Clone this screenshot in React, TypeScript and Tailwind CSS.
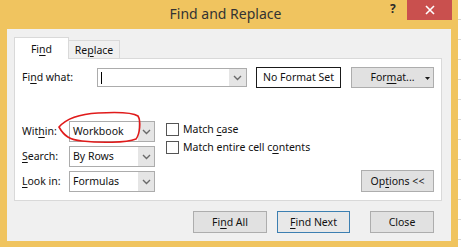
import React from "react";

const Chevron = () => (
  <svg width="9" height="6" viewBox="0 0 9 6">
    <polyline points="1,1 4.5,4.5 8,1" fill="none" stroke="#6a6a6a" strokeWidth="1.4" />
  </svg>
);

const U = ({ children }: { children: React.ReactNode }) => (
  <span className="underline decoration-1 underline-offset-[2px]">{children}</span>
);

function Select({ value }: { value: string }) {
  return (
    <div className="flex h-[21px] w-[86px] border border-[#acacac] bg-white">
      <div className="flex flex-1 items-center pl-[3px] text-[#111111]">{value}</div>
      <div className="flex w-[16px] items-center justify-center bg-[#e5e5e5]">
        <Chevron />
      </div>
    </div>
  );
}

function Btn({
  children,
  w,
  def,
}: {
  children: React.ReactNode;
  w: string;
  def?: boolean;
}) {
  return (
    <div
      className={
        "flex h-[22px] items-center justify-center border text-[#111111] " +
        w +
        (def ? " border-[#3c7fb1] bg-[#e8e8e8]" : " border-[#adadad] bg-[#e1e1e1]")
      }
    >
      {children}
    </div>
  );
}

export default function App() {
  return (
    <div className="relative flex h-[247px] w-[461px] overflow-hidden bg-white font-['Noto_Sans',sans-serif] text-[10.5px] leading-none">
      {/* window */}
      <div className="flex h-[247px] w-[458px] flex-col bg-[#f0c45f] pb-[6px] pl-[7px] pr-[7px]">
        {/* title bar */}
        <div className="relative flex h-[29px] shrink-0 items-center justify-center">
          <div className="-ml-[7px] -mt-[2px] text-[14px] text-[#333333]">Find and Replace</div>
          <div className="absolute left-[383px] top-[3px] text-[12px] font-bold text-[#2a2a2a]">?</div>
          <div className="absolute left-[400px] top-0 flex h-[20px] w-[45px] items-center justify-center bg-[#c9504e]">
            <svg width="10" height="10" viewBox="0 0 10 10">
              <path d="M1 1 L9 9 M9 1 L1 9" stroke="#ffffff" strokeWidth="1.6" />
            </svg>
          </div>
        </div>
        {/* body */}
        <div className="flex flex-1 flex-col bg-[#f0f0f0] pl-[7px] pr-[9px] pt-[8px]">
          {/* tabs */}
          <div className="relative z-10 flex items-start">
            <div className="-mb-px flex h-[22px] w-[55px] justify-center border border-b-0 border-[#d9d9d9] bg-white pt-[6px] text-[#111111]">
              Fi<U>n</U>d
            </div>
            <div className="mt-[3px] flex h-[18px] w-[51px] justify-center border border-b-0 border-l-0 border-[#d9d9d9] bg-[#f0f0f0] pt-[4px] text-[#111111]">
              Re<U>p</U>lace
            </div>
          </div>
          {/* panel */}
          <div className="flex h-[143px] flex-col border border-[#d9d9d9] bg-white pl-[7px] pr-[7px] pt-[8px]">
            {/* find what row */}
            <div className="flex h-[21px] items-center">
              <div className="w-[75px] text-[#111111]">
                Fi<U>n</U>d what:
              </div>
              <div className="flex h-[19px] w-[150px] border border-[#acacac] bg-white">
                <div className="flex flex-1 items-center pl-[3px]">
                  <div className="h-[12px] w-[1px] bg-black" />
                </div>
                <div className="flex w-[17px] items-center justify-center bg-[#e5e5e5]">
                  <Chevron />
                </div>
              </div>
              <div className="ml-[9px] flex h-[21px] w-[85px] items-center justify-center border border-[#1a1a1a] bg-white text-[#111111]">
                No Format Set
              </div>
              <div className="relative ml-[10px] flex h-[21px] w-[83px] items-center justify-center border border-[#adadad] bg-[#e1e1e1] text-[#111111]">
                For<U>m</U>at...
                <svg className="absolute right-[3px] top-[9px]" width="5" height="3" viewBox="0 0 5 3">
                  <path d="M0 0 L5 0 L2.5 3 Z" fill="#1a1a1a" />
                </svg>
              </div>
            </div>
            {/* lower section */}
            <div className="mt-[33px] flex items-end">
              <div className="flex flex-col">
                <div className="flex h-[21px] items-center">
                  <div className="w-[47px] text-[#111111]">
                    Wit<U>h</U>in:
                  </div>
                  <Select value="Workbook" />
                </div>
                <div className="mt-[4px] flex h-[21px] items-center">
                  <div className="w-[47px] text-[#111111]">
                    <U>S</U>earch:
                  </div>
                  <Select value="By Rows" />
                </div>
                <div className="mt-[4px] flex h-[21px] items-center">
                  <div className="w-[47px] text-[#111111]">
                    <U>L</U>ook in:
                  </div>
                  <Select value="Formulas" />
                </div>
              </div>
              <div className="ml-[11px] flex flex-col self-start pt-[2px]">
                <div className="flex h-[13px] items-center">
                  <div className="h-[13px] w-[13px] border border-[#555555] bg-white" />
                  <div className="ml-[4px] text-[#111111]">
                    Match <U>c</U>ase
                  </div>
                </div>
                <div className="mt-[5px] flex h-[13px] items-center">
                  <div className="h-[13px] w-[13px] border border-[#555555] bg-white" />
                  <div className="ml-[4px] text-[#111111]">
                    Match entire cell c<U>o</U>ntents
                  </div>
                </div>
              </div>
              <div className="flex-1" />
              <Btn w="w-[73px]">
                Op<U>t</U>ions &lt;&lt;
              </Btn>
            </div>
          </div>
          {/* bottom buttons */}
          <div className="mt-[10px] flex justify-end pr-[8px]">
            <Btn w="w-[74px]">
              Fi<U>n</U>d All
            </Btn>
            <div className="ml-[10px]">
              <Btn w="w-[73px]" def>
                <U>F</U>ind Next
              </Btn>
            </div>
            <div className="ml-[20px]">
              <Btn w="w-[64px]">Close</Btn>
            </div>
          </div>
        </div>
      </div>
      {/* spreadsheet strip behind */}
      <div className="flex flex-1 flex-col bg-white">
        {Array.from({ length: 13 }).map((_, i) => (
          <div key={i} className="h-[20px] shrink-0 border-b border-[#dadada]" />
        ))}
      </div>
      {/* red annotation ellipse */}
      <svg className="pointer-events-none absolute left-0 top-0" width="461" height="247" viewBox="0 0 461 247">
        <path
          d="M59 127 C 66 119, 80 114, 98 113 C 115 112, 132 112, 138 116 C 141 121, 140 134, 136 139 C 126 143, 100 143, 82 141 C 70 140, 64 136, 59 127 Z"
          fill="none"
          stroke="#e01b1b"
          strokeWidth="1.6"
        />
      </svg>
    </div>
  );
}
